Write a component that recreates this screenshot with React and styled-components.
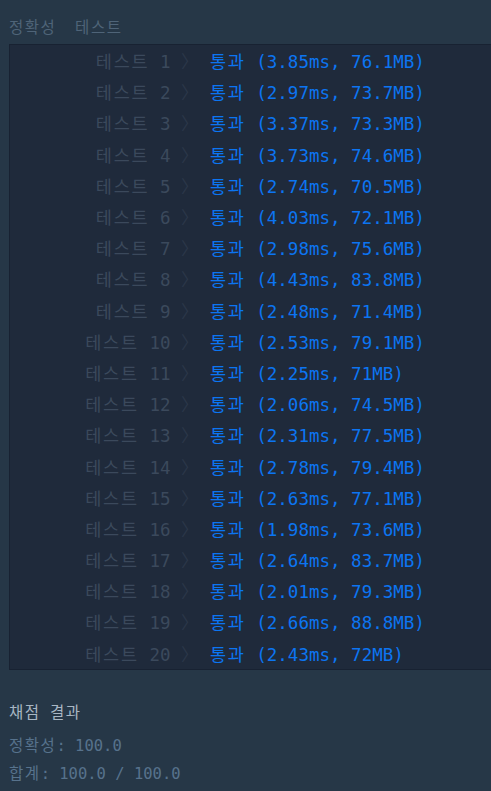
import React from "react";
import styled, { createGlobalStyle } from "styled-components";

const Global = createGlobalStyle`
  html, body { margin: 0; padding: 0; background: #263747; overflow: hidden; }
  body { width: 491px; height: 791px; }
`;

const MONO = `"DejaVu Sans Mono", "Noto Sans CJK KR", monospace`;

const Page = styled.div`
  padding: 17px 0 0 9px;
  font-family: ${MONO};
`;

const Ko = styled.span`
  letter-spacing: 0.1em;
`;

const Heading = styled.div`
  font-size: 15.5px;
  line-height: 22px;
  color: #4f6478;
  white-space: pre;
  margin-bottom: 5px;
`;

const Panel = styled.div`
  width: 640px;
  background: #1f2a3b;
  border: 1px solid #182232;
  box-sizing: border-box;
`;

const Row = styled.div`
  display: grid;
  grid-template-columns: 188.5px 1fr;
  column-gap: 11.5px;
  height: 31.2px;
  align-items: center;
  font-size: 17.5px;
  white-space: pre;
`;

const Title = styled.span`
  text-align: right;
  color: #3b495c;
`;

const Chevron = styled.span`
  color: #2b3749;
`;

const Result = styled.span`
  color: ${(p) => (p.$passed ? "#0c75f2" : "#e5434a")};
`;

const Summary = styled.div`
  padding-top: 29px;
`;

const SummaryTitle = styled.div`
  font-size: 15.5px;
  line-height: 28px;
  color: #a8b6c3;
  margin-bottom: 5px;
`;

const SummaryLine = styled.div`
  font-size: 15.5px;
  line-height: 28px;
  color: #57728c;
  white-space: pre;
`;

const data = [
  ["3.85", "76.1"], ["2.97", "73.7"], ["3.37", "73.3"], ["3.73", "74.6"],
  ["2.74", "70.5"], ["4.03", "72.1"], ["2.98", "75.6"], ["4.43", "83.8"],
  ["2.48", "71.4"], ["2.53", "79.1"], ["2.25", "71"], ["2.06", "74.5"],
  ["2.31", "77.5"], ["2.78", "79.4"], ["2.63", "77.1"], ["1.98", "73.6"],
  ["2.64", "83.7"], ["2.01", "79.3"], ["2.66", "88.8"], ["2.43", "72"],
];

export default function App() {
  return (
    <>
      <Global />
      <Page>
        <Heading>
          <Ko>정확성</Ko>  <Ko>테스트</Ko>
        </Heading>
        <Panel>
          {data.map(([ms, mb], i) => (
            <Row key={i}>
              <Title>
                <Ko>테스트</Ko> {i + 1} <Chevron>〉</Chevron>
              </Title>
              <Result $passed>
                <Ko>통과</Ko> ({ms}ms, {mb}MB)
              </Result>
            </Row>
          ))}
        </Panel>
        <Summary>
          <SummaryTitle>
            <Ko>채점</Ko> <Ko>결과</Ko>
          </SummaryTitle>
          <SummaryLine>
            <Ko>정확성</Ko>: 100.0
          </SummaryLine>
          <SummaryLine>
            <Ko>합계</Ko>: 100.0 / 100.0
          </SummaryLine>
        </Summary>
      </Page>
    </>
  );
}
